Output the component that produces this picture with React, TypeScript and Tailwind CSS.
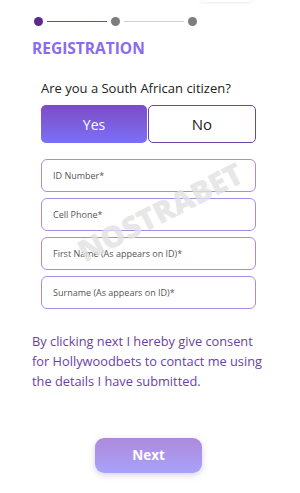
import React from "react";

export default function App() {
  const fields = [
    "ID Number*",
    "Cell Phone*",
    "First Name (As appears on ID)*",
    "Surname (As appears on ID)*",
  ];
  return (
    <div
      className="relative w-[300px] h-[493px] bg-white overflow-hidden"
      style={{ fontFamily: '"Open Sans", "Noto Sans", sans-serif' }}
    >
      <div className="absolute left-[200px] top-[-6px] w-[52px] h-[8px] rounded-full shadow-[0_1px_3px_rgba(0,0,0,0.08)]" />
      {/* stepper */}
      <div className="flex items-center pl-[34px] pt-[17px]">
        <div className="w-[9px] h-[9px] rounded-full bg-[#5b2a8f]" />
        <div className="w-[60px] h-[1px] bg-[#6d4aa8] mx-[4px]" />
        <div className="w-[9px] h-[9px] rounded-full bg-[#7d7d7d]" />
        <div className="w-[60px] h-[1px] bg-[#cfcfcf] mx-[4px]" />
        <div className="w-[9px] h-[9px] rounded-full bg-[#7d7d7d]" />
      </div>
      <div className="pl-[32px] mt-[12px] text-[15.5px] leading-[20px] font-bold text-[#8a6bf0]">
        REGISTRATION
      </div>
      <div className="pl-[41px] mt-[20px] text-[13px] leading-[20px] text-[#222]">
        Are you a South African citizen?
      </div>
      <div className="flex ml-[41px] mt-[7px] w-[215px] h-[38px]">
        <div className="w-[106px] h-full rounded-[5px] bg-gradient-to-b from-[#7c4bc6] to-[#7a70f6] flex items-center justify-center text-white text-[14px]">
          Yes
        </div>
        <div className="ml-[1px] flex-1 h-full rounded-[5px] border border-[#6f44a6] flex items-center justify-center text-[#222] text-[15px]">
          No
        </div>
      </div>
      <div className="flex flex-col gap-[6px] ml-[41px] mt-[16px] w-[215px]">
        {fields.map((f) => (
          <div
            key={f}
            className="h-[33px] rounded-[6px] border border-[#a98be6] flex items-center pl-[11px] pt-[1px] text-[9px] text-[#555]"
          >
            {f}
          </div>
        ))}
      </div>
      <div className="pl-[32px] pr-[30px] mt-[22px] text-[12.8px] leading-[20px] text-[#6a3fa6]">
        By clicking next I hereby give consent for Hollywoodbets to contact me using the details I have submitted.
      </div>
      <div className="flex justify-center mt-[47px]">
        <div className="ml-[-3px] w-[107px] h-[35px] rounded-[9px] bg-gradient-to-b from-[#ad8adb] to-[#a7a2fa] shadow-[0_2px_6px_rgba(120,100,180,0.3)] flex items-center justify-center text-white font-bold text-[13.5px]">
          Next
        </div>
      </div>
      {/* watermark */}
      <div
        className="absolute left-[70px] top-[195px] -rotate-[27deg] text-[30px] leading-[34px] font-extrabold text-[#e2e2e2] opacity-80 pointer-events-none"
        style={{ fontFamily: '"Open Sans", sans-serif' }}
      >
        NOSTRABET
      </div>
    </div>
  );
}
